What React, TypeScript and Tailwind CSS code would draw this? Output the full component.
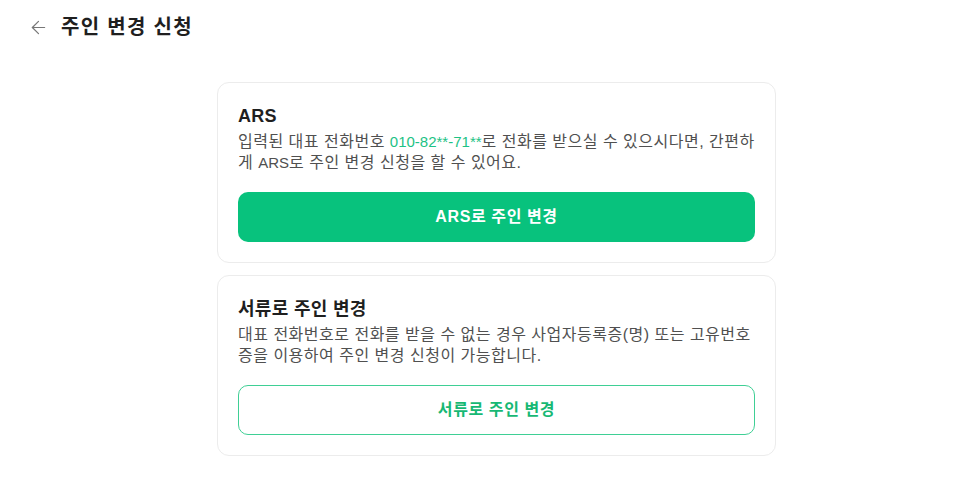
import React from "react";
import { ArrowLeft } from "lucide-react";

const font = { fontFamily: '"Liberation Sans", "Noto Sans CJK KR", sans-serif' };

function OptionCard({
  title,
  children,
  action,
  filled,
}: {
  title: string;
  children: React.ReactNode;
  action: string;
  filled?: boolean;
}) {
  return (
    <section className="rounded-xl border border-[#ececec] bg-white px-5 pt-[21px] pb-5">
      <h2 className="text-[18px] font-bold leading-[24px] tracking-[0.3px] text-[#1f1f1f]">{title}</h2>
      <p className="mt-[3px] text-[16px] leading-[21px] tracking-[0.5px] text-[#505050]">{children}</p>
      <button
        className={
          filled
            ? "mt-[19px] flex h-[50px] w-full items-center justify-center rounded-[10px] bg-[#08c27d] text-[16px] font-bold tracking-[0.6px] text-white"
            : "mt-[19px] flex h-[50px] w-full items-center justify-center rounded-[10px] border border-[#3fcf95] bg-white text-[16px] font-bold tracking-[0.6px] text-[#17b874]"
        }
      >
        {action}
      </button>
    </section>
  );
}

export default function App() {
  return (
    <div className="min-h-[501px] w-full bg-white" style={font}>
      <header className="flex items-center gap-[12px] pl-[28px] pt-[15px]">
        <ArrowLeft size={21} strokeWidth={1.4} className="text-[#777]" />
        <h1 className="text-[20px] font-bold leading-[24px] tracking-[1.3px] text-[#1f1f1f]">주인 변경 신청</h1>
      </header>

      <main className="ml-[217px] mt-[43px] flex w-[559px] flex-col gap-3">
        <OptionCard title="ARS" action="ARS로 주인 변경" filled>
          입력된 대표 전화번호{" "}
          <span className="text-[15px] tracking-normal text-[#1dc285]">010-82**-71**</span>로 전화를 받으실 수 있으시다면, 간편하게{" "}
          <span className="text-[15px] tracking-normal">ARS</span>로 주인 변경 신청을 할 수 있어요.
        </OptionCard>
        <OptionCard title="서류로 주인 변경" action="서류로 주인 변경">
          대표 전화번호로 전화를 받을 수 없는 경우 사업자등록증(명) 또는 고유번호증을 이용하여 주인 변경 신청이 가능합니다.
        </OptionCard>
      </main>
    </div>
  );
}
